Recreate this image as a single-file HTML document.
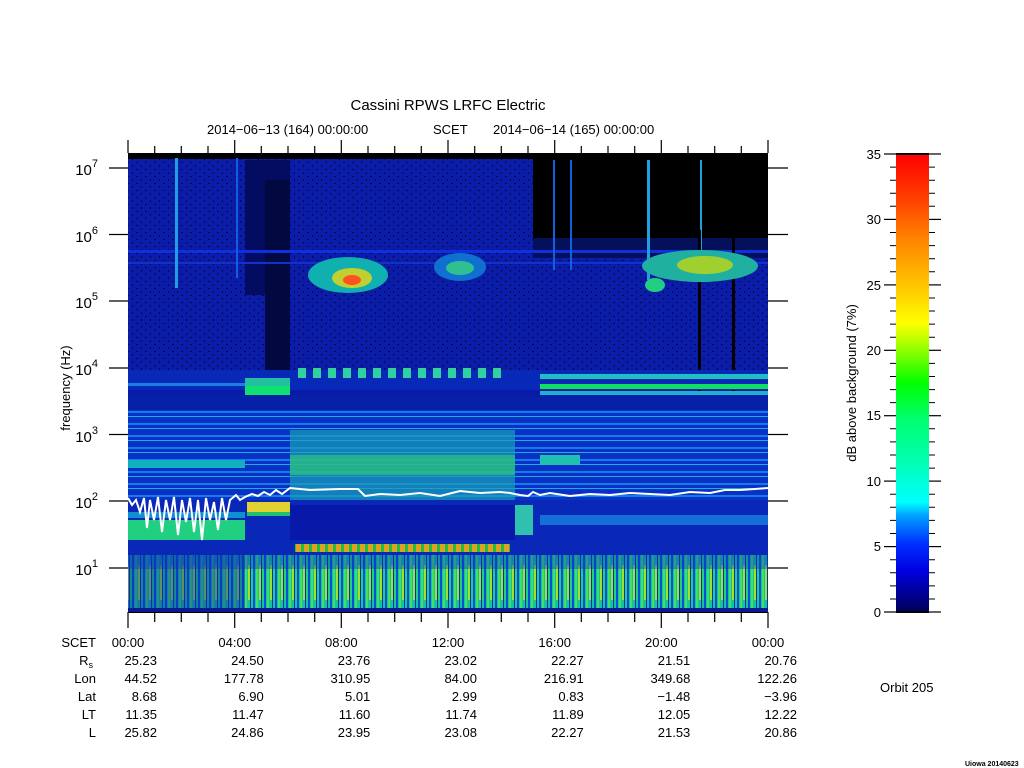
<!DOCTYPE html>
<html><head><meta charset="utf-8"><style>
html,body{margin:0;padding:0;background:#fff;width:1024px;height:768px;overflow:hidden}
svg{display:block;font-family:"Liberation Sans",sans-serif}
</style></head><body>
<svg width="1024" height="768" viewBox="0 0 1024 768" xmlns="http://www.w3.org/2000/svg">
<defs>
<linearGradient id="cb" x1="0" y1="1" x2="0" y2="0">
<stop offset="0" stop-color="#000058"/>
<stop offset="0.09" stop-color="#0000e0"/>
<stop offset="0.15" stop-color="#0030ff"/>
<stop offset="0.21" stop-color="#00a0ff"/>
<stop offset="0.24" stop-color="#00ffff"/>
<stop offset="0.33" stop-color="#00ffb0"/>
<stop offset="0.42" stop-color="#00ff70"/>
<stop offset="0.5" stop-color="#00ff00"/>
<stop offset="0.58" stop-color="#a0ff00"/>
<stop offset="0.63" stop-color="#ffff00"/>
<stop offset="0.72" stop-color="#ffc000"/>
<stop offset="0.82" stop-color="#ff8000"/>
<stop offset="0.9" stop-color="#ff4000"/>
<stop offset="1" stop-color="#ff0000"/>
</linearGradient>
<pattern id="spk" width="9" height="7" patternUnits="userSpaceOnUse">
<rect x="1" y="1" width="2" height="1" fill="#000"/><rect x="6" y="4" width="1" height="2" fill="#000"/>
</pattern>
<pattern id="vs" width="11" height="60" patternUnits="userSpaceOnUse">
<rect width="11" height="60" fill="#18c0a0"/>
<rect x="0" width="2" height="60" fill="#0050d8"/>
<rect x="3" width="2" height="60" fill="#40e060"/>
<rect x="6" y="25" width="2" height="35" fill="#a0e030"/>
<rect x="8" width="1" height="60" fill="#0830b0"/>
<rect x="9" y="10" width="2" height="50" fill="#20d080"/>
</pattern>
<pattern id="hs" width="20" height="12" patternUnits="userSpaceOnUse">
<rect width="20" height="12" fill="#0a30c8"/>
<rect y="3" width="20" height="2" fill="#1080e0"/>
<rect y="8" width="20" height="1" fill="#18b0d8"/>
</pattern>
<pattern id="ds" width="8" height="8" patternUnits="userSpaceOnUse">
<rect width="8" height="8" fill="#e0a020"/><rect x="5" width="3" height="8" fill="#20c040"/>
</pattern>
</defs>

<!-- spectrogram -->
<rect x="128" y="153" width="640" height="459" fill="#0a1aa8"/>
<rect x="128" y="153" width="640" height="217" fill="#0a1ca8"/>
<rect x="128" y="153" width="640" height="217" fill="url(#spk)" opacity="0.6"/>
<rect x="128" y="153" width="405" height="6" fill="#000"/>
<rect x="245" y="160" width="45" height="135" fill="#030c60"/>
<rect x="265" y="180" width="25" height="190" fill="#020840"/>
<rect x="533" y="153" width="235" height="85" fill="#000"/>
<rect x="533" y="238" width="235" height="20" fill="#04105a"/>
<rect x="128" y="250" width="640" height="3" fill="#1030e0"/>
<rect x="128" y="262" width="640" height="2" fill="#1030d0"/>
<!-- vertical streaks -->
<rect x="175" y="158" width="3" height="130" fill="#20a0e0"/>
<rect x="236" y="158" width="2" height="120" fill="#1060e0"/>
<rect x="553" y="160" width="2" height="110" fill="#1060e0"/>
<rect x="570" y="160" width="2" height="110" fill="#1060e0"/>
<rect x="647" y="160" width="3" height="120" fill="#20a0e0"/>
<rect x="700" y="160" width="2" height="110" fill="#20a0e0"/>
<rect x="698" y="230" width="3" height="382" fill="#000"/>
<rect x="732" y="230" width="3" height="382" fill="#000"/>
<!-- emission blobs -->
<ellipse cx="348" cy="275" rx="40" ry="18" fill="#10b0b0"/>
<ellipse cx="352" cy="278" rx="20" ry="10" fill="#c0d030"/>
<ellipse cx="352" cy="280" rx="9" ry="5" fill="#ff5020"/>
<ellipse cx="460" cy="267" rx="26" ry="14" fill="#1070d0"/>
<ellipse cx="460" cy="268" rx="14" ry="7" fill="#30c090"/>
<ellipse cx="700" cy="266" rx="58" ry="16" fill="#20b0a0"/>
<ellipse cx="705" cy="265" rx="28" ry="9" fill="#a0d030"/>
<ellipse cx="655" cy="285" rx="10" ry="7" fill="#20d080"/>
<!-- mid band ~10^4 -->
<rect x="128" y="370" width="640" height="20" fill="#0828b8"/>
<rect x="245" y="378" width="45" height="8" fill="#20c0a0"/>
<rect x="245" y="386" width="45" height="10" fill="#10e070"/>
<g fill="#30d0a0"><rect x="298" y="368" width="8" height="10"/><rect x="313" y="368" width="8" height="10"/><rect x="328" y="368" width="8" height="10"/><rect x="343" y="368" width="8" height="10"/><rect x="358" y="368" width="8" height="10"/><rect x="373" y="368" width="8" height="10"/><rect x="388" y="368" width="8" height="10"/><rect x="403" y="368" width="8" height="10"/><rect x="418" y="368" width="8" height="10"/><rect x="433" y="368" width="8" height="10"/><rect x="448" y="368" width="8" height="10"/><rect x="463" y="368" width="8" height="10"/><rect x="478" y="368" width="8" height="10"/><rect x="493" y="368" width="8" height="10"/></g>
<rect x="540" y="374" width="228" height="5" fill="#20c0c0"/>
<rect x="540" y="384" width="228" height="5" fill="#10e060"/>
<rect x="540" y="391" width="228" height="4" fill="#20b0d0"/>
<rect x="128" y="383" width="117" height="3" fill="#1880e0"/>
<rect x="128" y="395" width="640" height="25" fill="#0620a8"/>
<rect x="128" y="410" width="640" height="90" fill="url(#hs)"/>
<rect x="290" y="430" width="225" height="70" fill="#18a0b8" opacity="0.7"/>
<rect x="290" y="455" width="225" height="20" fill="#30d070" opacity="0.6"/>
<rect x="128" y="460" width="117" height="8" fill="#10b0c0"/>
<rect x="540" y="455" width="40" height="10" fill="#20c0b0"/>
<rect x="128" y="500" width="640" height="55" fill="#0a28b8"/>
<rect x="128" y="520" width="117" height="20" fill="#20d080"/>
<rect x="128" y="512" width="117" height="6" fill="#1090d0"/>
<rect x="247" y="502" width="43" height="12" fill="#e0d030"/>
<rect x="247" y="512" width="43" height="4" fill="#20c070"/>
<rect x="290" y="505" width="225" height="35" fill="#0818a8"/>
<rect x="515" y="505" width="18" height="30" fill="#30c0b0"/>
<rect x="540" y="515" width="228" height="10" fill="#1470d8"/>
<rect x="295" y="544" width="215" height="8" fill="url(#ds)"/>
<rect x="128" y="555" width="640" height="57" fill="url(#vs)"/>
<rect x="128" y="555" width="117" height="57" fill="#0a2cb0" opacity="0.45"/>
<rect x="128" y="555" width="640" height="14" fill="#0a30c0" opacity="0.4"/>
<rect x="128" y="608" width="640" height="4" fill="#0a1a90"/>
<!-- white line -->
<polyline fill="none" stroke="#fff" stroke-width="2" points="128,498 132,505 136,500 140,512 144,498 147,528 150,500 154,520 158,497 162,532 166,500 170,520 174,497 178,535 182,500 186,522 190,498 194,532 198,500 202,540 206,498 210,520 214,502 218,530 222,498 226,520 230,500 236,495 240,500 245,497 252,494 258,496 264,492 270,495 276,490 282,494 290,488 310,490 340,489 358,489 365,496 380,494 400,495 420,493 440,496 460,491 480,493 500,492 510,493 520,495 528,496 533,492 540,495 550,493 570,496 590,494 610,495 630,493 650,494 670,495 690,492 710,493 725,490 740,490 755,489 768,488"/>
<rect x="128" y="612" width="640" height="1" fill="#000"/>

<!-- axes ticks -->
<g stroke="#000" stroke-width="1.3">
<line x1="109" y1="168" x2="128" y2="168"/><line x1="109" y1="234.5" x2="128" y2="234.5"/><line x1="109" y1="301" x2="128" y2="301"/><line x1="109" y1="368" x2="128" y2="368"/><line x1="109" y1="434.5" x2="128" y2="434.5"/><line x1="109" y1="501" x2="128" y2="501"/><line x1="109" y1="568" x2="128" y2="568"/>
<line x1="768" y1="168" x2="788" y2="168"/><line x1="768" y1="234.5" x2="788" y2="234.5"/><line x1="768" y1="301" x2="788" y2="301"/><line x1="768" y1="368" x2="788" y2="368"/><line x1="768" y1="434.5" x2="788" y2="434.5"/><line x1="768" y1="501" x2="788" y2="501"/><line x1="768" y1="568" x2="788" y2="568"/>
</g>
<g stroke="#000" stroke-width="1.2">
<line x1="128" y1="140" x2="128" y2="153"/><line x1="154.7" y1="146" x2="154.7" y2="153"/><line x1="181.3" y1="146" x2="181.3" y2="153"/><line x1="208" y1="146" x2="208" y2="153"/>
<line x1="234.7" y1="140" x2="234.7" y2="153"/><line x1="261.3" y1="146" x2="261.3" y2="153"/><line x1="288" y1="146" x2="288" y2="153"/><line x1="314.7" y1="146" x2="314.7" y2="153"/>
<line x1="341.3" y1="140" x2="341.3" y2="153"/><line x1="368" y1="146" x2="368" y2="153"/><line x1="394.7" y1="146" x2="394.7" y2="153"/><line x1="421.3" y1="146" x2="421.3" y2="153"/>
<line x1="448" y1="140" x2="448" y2="153"/><line x1="474.7" y1="146" x2="474.7" y2="153"/><line x1="501.3" y1="146" x2="501.3" y2="153"/><line x1="528" y1="146" x2="528" y2="153"/>
<line x1="554.7" y1="140" x2="554.7" y2="153"/><line x1="581.3" y1="146" x2="581.3" y2="153"/><line x1="608" y1="146" x2="608" y2="153"/><line x1="634.7" y1="146" x2="634.7" y2="153"/>
<line x1="661.3" y1="140" x2="661.3" y2="153"/><line x1="688" y1="146" x2="688" y2="153"/><line x1="714.7" y1="146" x2="714.7" y2="153"/><line x1="741.3" y1="146" x2="741.3" y2="153"/>
<line x1="768" y1="140" x2="768" y2="153"/>
</g>
<g stroke="#000" stroke-width="1.2">
<line x1="128" y1="612" x2="128" y2="628"/><line x1="154.7" y1="612" x2="154.7" y2="622"/><line x1="181.3" y1="612" x2="181.3" y2="622"/><line x1="208" y1="612" x2="208" y2="622"/>
<line x1="234.7" y1="612" x2="234.7" y2="628"/><line x1="261.3" y1="612" x2="261.3" y2="622"/><line x1="288" y1="612" x2="288" y2="622"/><line x1="314.7" y1="612" x2="314.7" y2="622"/>
<line x1="341.3" y1="612" x2="341.3" y2="628"/><line x1="368" y1="612" x2="368" y2="622"/><line x1="394.7" y1="612" x2="394.7" y2="622"/><line x1="421.3" y1="612" x2="421.3" y2="622"/>
<line x1="448" y1="612" x2="448" y2="628"/><line x1="474.7" y1="612" x2="474.7" y2="622"/><line x1="501.3" y1="612" x2="501.3" y2="622"/><line x1="528" y1="612" x2="528" y2="622"/>
<line x1="554.7" y1="612" x2="554.7" y2="628"/><line x1="581.3" y1="612" x2="581.3" y2="622"/><line x1="608" y1="612" x2="608" y2="622"/><line x1="634.7" y1="612" x2="634.7" y2="622"/>
<line x1="661.3" y1="612" x2="661.3" y2="628"/><line x1="688" y1="612" x2="688" y2="622"/><line x1="714.7" y1="612" x2="714.7" y2="622"/><line x1="741.3" y1="612" x2="741.3" y2="622"/>
<line x1="768" y1="612" x2="768" y2="628"/>
</g>

<!-- titles -->
<text x="448" y="110" font-size="15" text-anchor="middle">Cassini RPWS LRFC Electric</text>
<text x="207" y="134" font-size="13">2014−06−13 (164) 00:00:00</text>
<text x="433" y="134" font-size="13">SCET</text>
<text x="493" y="134" font-size="13">2014−06−14 (165) 00:00:00</text>

<!-- y labels -->
<g font-size="15" text-anchor="end">
<text x="98" y="175">10<tspan dy="-8" font-size="11">7</tspan></text>
<text x="98" y="242">10<tspan dy="-8" font-size="11">6</tspan></text>
<text x="98" y="308">10<tspan dy="-8" font-size="11">5</tspan></text>
<text x="98" y="375">10<tspan dy="-8" font-size="11">4</tspan></text>
<text x="98" y="442">10<tspan dy="-8" font-size="11">3</tspan></text>
<text x="98" y="508">10<tspan dy="-8" font-size="11">2</tspan></text>
<text x="98" y="575">10<tspan dy="-8" font-size="11">1</tspan></text>
</g>
<text transform="translate(70,388) rotate(-90)" font-size="13" text-anchor="middle">frequency (Hz)</text>

<!-- bottom table -->
<g font-size="13">
<g text-anchor="end">
<text x="96" y="647">SCET</text>
<text x="93" y="665">R<tspan dy="3" font-size="9">s</tspan></text>
<text x="96" y="683">Lon</text>
<text x="96" y="701">Lat</text>
<text x="96" y="719">LT</text>
<text x="96" y="737">L</text>
</g>
<g text-anchor="middle">
<text x="128" y="647">00:00</text><text x="234.7" y="647">04:00</text><text x="341.3" y="647">08:00</text><text x="448" y="647">12:00</text><text x="554.7" y="647">16:00</text><text x="661.3" y="647">20:00</text><text x="768" y="647">00:00</text>
</g>
<g text-anchor="end">
<text x="157" y="665">25.23</text><text x="263.7" y="665">24.50</text><text x="370.3" y="665">23.76</text><text x="477" y="665">23.02</text><text x="583.7" y="665">22.27</text><text x="690.3" y="665">21.51</text><text x="797" y="665">20.76</text>
<text x="157" y="683">44.52</text><text x="263.7" y="683">177.78</text><text x="370.3" y="683">310.95</text><text x="477" y="683">84.00</text><text x="583.7" y="683">216.91</text><text x="690.3" y="683">349.68</text><text x="797" y="683">122.26</text>
<text x="157" y="701">8.68</text><text x="263.7" y="701">6.90</text><text x="370.3" y="701">5.01</text><text x="477" y="701">2.99</text><text x="583.7" y="701">0.83</text><text x="690.3" y="701">−1.48</text><text x="797" y="701">−3.96</text>
<text x="157" y="719">11.35</text><text x="263.7" y="719">11.47</text><text x="370.3" y="719">11.60</text><text x="477" y="719">11.74</text><text x="583.7" y="719">11.89</text><text x="690.3" y="719">12.05</text><text x="797" y="719">12.22</text>
<text x="157" y="737">25.82</text><text x="263.7" y="737">24.86</text><text x="370.3" y="737">23.95</text><text x="477" y="737">23.08</text><text x="583.7" y="737">22.27</text><text x="690.3" y="737">21.53</text><text x="797" y="737">20.86</text>
</g>
<text x="880" y="692">Orbit 205</text>
</g>
<text x="965" y="766" font-size="7" font-weight="bold">Uiowa 20140623</text>

<!-- colorbar -->
<rect x="896" y="154" width="33" height="458" fill="url(#cb)"/>
<rect x="896" y="153" width="33" height="2" fill="#000"/>
<rect x="896" y="611" width="33" height="2" fill="#000"/>
<g stroke="#000" stroke-width="1.2">
<line x1="884" y1="154" x2="896" y2="154"/><line x1="929" y1="154" x2="941" y2="154"/>
<line x1="884" y1="219.4" x2="896" y2="219.4"/><line x1="929" y1="219.4" x2="941" y2="219.4"/>
<line x1="884" y1="284.9" x2="896" y2="284.9"/><line x1="929" y1="284.9" x2="941" y2="284.9"/>
<line x1="884" y1="350.3" x2="896" y2="350.3"/><line x1="929" y1="350.3" x2="941" y2="350.3"/>
<line x1="884" y1="415.7" x2="896" y2="415.7"/><line x1="929" y1="415.7" x2="941" y2="415.7"/>
<line x1="884" y1="481.1" x2="896" y2="481.1"/><line x1="929" y1="481.1" x2="941" y2="481.1"/>
<line x1="884" y1="546.6" x2="896" y2="546.6"/><line x1="929" y1="546.6" x2="941" y2="546.6"/>
<line x1="884" y1="612" x2="896" y2="612"/><line x1="929" y1="612" x2="941" y2="612"/>
</g>
<g stroke="#000" stroke-width="1">
<path d="M890 167.1H896M890 180.2H896M890 193.3H896M890 206.3H896M890 232.5H896M890 245.6H896M890 258.7H896M890 271.8H896M890 298H896M890 311H896M890 324.1H896M890 337.2H896M890 363.4H896M890 376.5H896M890 389.6H896M890 402.6H896M890 428.8H896M890 441.9H896M890 455H896M890 468.1H896M890 494.2H896M890 507.3H896M890 520.4H896M890 533.5H896M890 559.7H896M890 572.8H896M890 585.9H896M890 599H896"/>
<path d="M929 167.1H935M929 180.2H935M929 193.3H935M929 206.3H935M929 232.5H935M929 245.6H935M929 258.7H935M929 271.8H935M929 298H935M929 311H935M929 324.1H935M929 337.2H935M929 363.4H935M929 376.5H935M929 389.6H935M929 402.6H935M929 428.8H935M929 441.9H935M929 455H935M929 468.1H935M929 494.2H935M929 507.3H935M929 520.4H935M929 533.5H935M929 559.7H935M929 572.8H935M929 585.9H935M929 599H935"/>
</g>
<g font-size="13" text-anchor="end">
<text x="881" y="159">35</text><text x="881" y="224">30</text><text x="881" y="290">25</text><text x="881" y="355">20</text><text x="881" y="420">15</text><text x="881" y="486">10</text><text x="881" y="551">5</text><text x="881" y="617">0</text>
</g>
<text transform="translate(856,383) rotate(-90)" font-size="13" text-anchor="middle">dB above background (7%)</text>
</svg>
</body></html>
